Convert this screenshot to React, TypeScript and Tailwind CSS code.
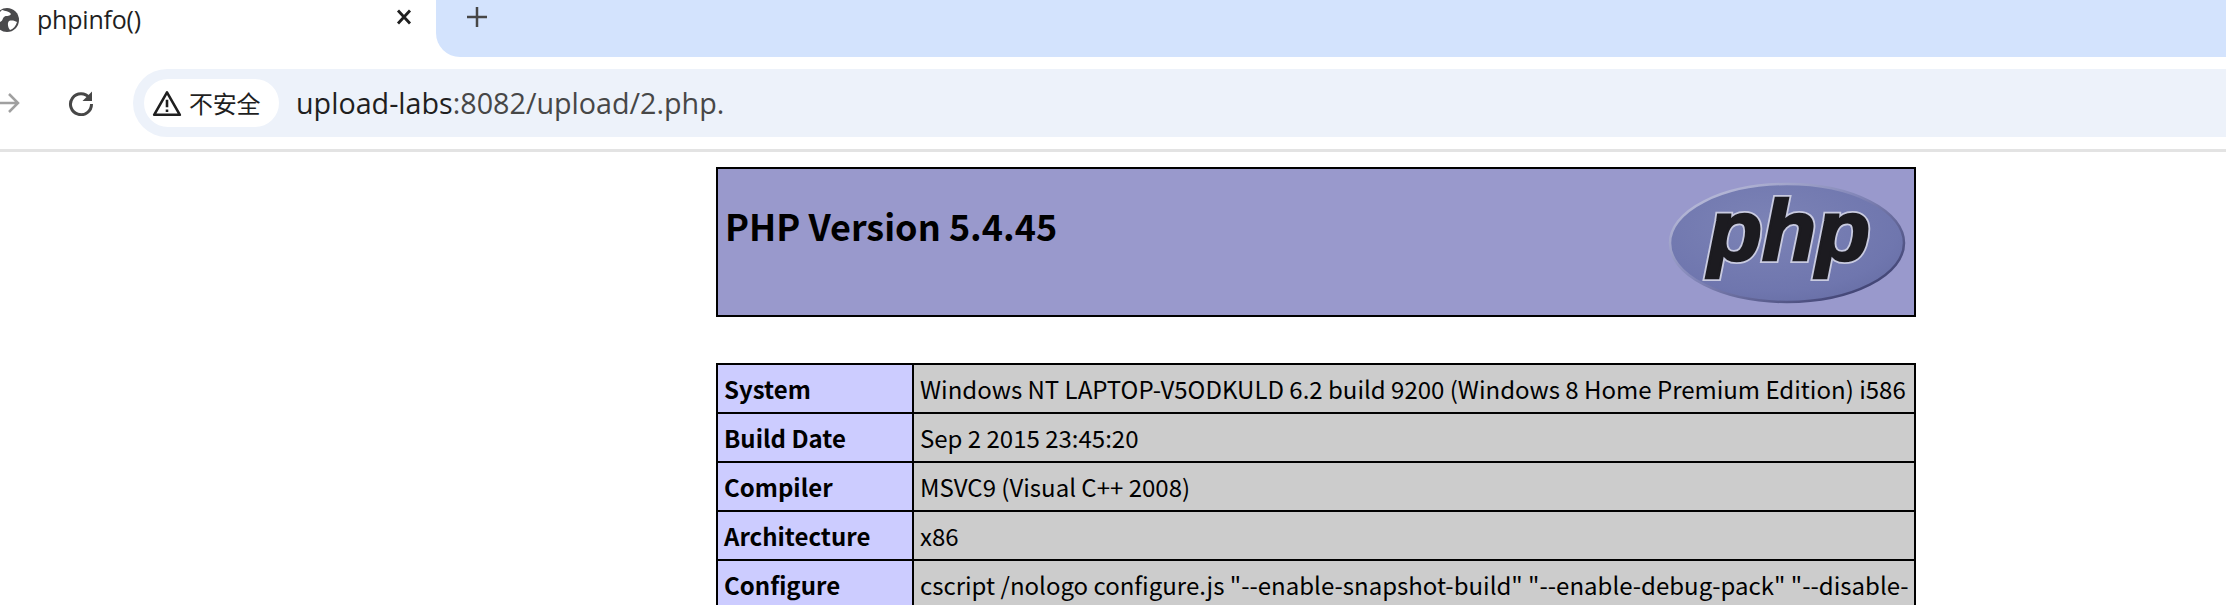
import React from "react";

const rows = [
  ["System", "Windows NT LAPTOP-V5ODKULD 6.2 build 9200 (Windows 8 Home Premium Edition) i586"],
  ["Build Date", "Sep 2 2015 23:45:20"],
  ["Compiler", "MSVC9 (Visual C++ 2008)"],
  ["Architecture", "x86"],
  ["Configure", 'cscript /nologo configure.js "--enable-snapshot-build" "--enable-debug-pack" "--disable-zts"'],
];

function PhpLogo() {
  const letters = {
    x: 121,
    y: 78,
    textAnchor: "middle" as const,
    fontFamily: "'Liberation Sans', sans-serif",
    fontWeight: 700,
    fontStyle: "italic",
    fontSize: 86,
    textLength: 162,
    lengthAdjust: "spacingAndGlyphs" as const,
  };
  return (
    <svg width="238" height="124" viewBox="0 0 238 124">
      <defs>
        <radialGradient id="logoFill" cx="0.42" cy="0.35" r="0.75">
          <stop offset="0" stopColor="#7c83b6" />
          <stop offset="0.75" stopColor="#6f76ae" />
          <stop offset="1" stopColor="#666da4" />
        </radialGradient>
        <linearGradient id="logoEdge" x1="0" y1="0" x2="1" y2="1">
          <stop offset="0" stopColor="#c9cbe2" />
          <stop offset="0.45" stopColor="#8286b8" />
          <stop offset="1" stopColor="#2e3060" />
        </linearGradient>
      </defs>
      <ellipse cx="119" cy="61" rx="117" ry="59" fill="url(#logoFill)" stroke="url(#logoEdge)" strokeWidth="2.5" />
      <text {...letters} fill="#c9cbe0" stroke="#c9cbe0" strokeWidth="6">php</text>
      <text {...letters} fill="#1c1b20" stroke="#1c1b20" strokeWidth="2.500">php</text>
    </svg>
  );
}

export default function App() {
  return (
    <div className="h-[605px] w-[2226px] overflow-hidden bg-white font-['Noto_Sans_CJK_SC','Noto_Sans',sans-serif] text-black">
      {/* tab strip */}
      <div className="flex h-[57px]">
        <div className="relative flex w-[436px] items-center pb-[18px]">
          <svg className="ml-[-5px] shrink-0" width="24" height="24" viewBox="0 0 24 24">
            <circle cx="12" cy="12" r="12" fill="#4a4a4c" />
            <path d="M7 2c3 1 7 1 9 4-2 3-5 1-7 3s-1 4-4 5C3 12 2 8 2.500 6.500ZM14 13c3-1 6 0 8 1-1 4-4 7-7 8-2-2-3-7-1-9Z" fill="#ffffff" />
          </svg>
          <span className="ml-[18px] text-[25px] leading-none tracking-[-0.2px] text-[#1f1f1f] font-['Open_Sans',sans-serif]">phpinfo()</span>
          <svg className="absolute left-[396px] top-[9px]" width="16" height="16" viewBox="0 0 16 16">
            <path d="M2 1.500 14 14.500M14 1.500 2 14.500" stroke="#1f1f1f" strokeWidth="2.800" fill="none" />
          </svg>
        </div>
        <div className="flex flex-1 items-start rounded-bl-[24px] bg-[#d3e3fd]">
          <svg className="ml-[31px] mt-[7px]" width="20" height="20" viewBox="0 0 20 20">
            <path d="M10 0v20M0 10h20" stroke="#474747" strokeWidth="2.500" fill="none" />
          </svg>
        </div>
      </div>

      {/* toolbar */}
      <div className="flex h-[95px] items-start border-b-[3px] border-[#e3e3e3] pt-[12px]">
        <svg className="ml-[-3px] mt-[23px] shrink-0" width="24" height="22" viewBox="0 0 24 22">
          <path d="M1 11h20M12 2l9 9-9 9" stroke="#a0a0a0" strokeWidth="2.500" fill="none" />
        </svg>
        <svg className="ml-[46px] mt-[21px] shrink-0" width="28" height="26" viewBox="0 0 28 26">
          <path d="M22.500 8A10.500 10.500 0 1 0 24.500 14" stroke="#474747" strokeWidth="3" fill="none" />
          <path d="M25 1.500V11h-9.500Z" fill="#474747" />
        </svg>
        <div className="ml-[38px] flex h-[68px] flex-1 items-center rounded-l-full bg-[#edf2fa] pl-[11px]">
          <div className="flex h-[48px] w-[135px] items-center rounded-full bg-white pl-[8px]">
            <svg width="30" height="28" viewBox="0 0 28 26">
              <path d="M14 3 26 24H2Z" stroke="#1f1f1f" strokeWidth="2.400" fill="none" strokeLinejoin="round" />
              <path d="M14 10v7M14 19v2.500" stroke="#1f1f1f" strokeWidth="2.400" fill="none" />
            </svg>
            <span className="ml-[7px] text-[24px] leading-none tracking-[-0.2px] text-[#1f1f1f]">不安全</span>
          </div>
          <div className="ml-[17px] text-[28.700px] leading-none text-[#474747] font-['Open_Sans',sans-serif]">
            <span className="text-[#1f1f1f]">upload-labs</span>:8082/upload/2.php.
          </div>
        </div>
      </div>

      {/* page */}
      <div className="ml-[716px] w-[1200px] pt-[15px]">
        <div className="flex h-[150px] items-start justify-between border-2 border-black bg-[#9999cc] pr-[8px] pt-[13px]">
          <h1 className="pl-[7px] pt-[17px] text-[36px] font-bold leading-[52px]">PHP Version 5.4.45</h1>
          <PhpLogo />
        </div>
        <table className="mt-[46px] w-[1200px] table-fixed border-collapse text-[24px] leading-[47px]">
          <colgroup>
            <col className="w-[196px]" />
            <col />
          </colgroup>
          <tbody>
            {rows.map(([label, value]) => (
              <tr key={label} className="h-[49px]">
                <td className="border-2 border-black bg-[#ccccff] px-[6px] py-0 align-top font-bold">{label}</td>
                <td className="border-2 border-black bg-[#cccccc] pl-[6px] pr-0 py-0 align-top">{value}</td>
              </tr>
            ))}
          </tbody>
        </table>
      </div>
    </div>
  );
}
